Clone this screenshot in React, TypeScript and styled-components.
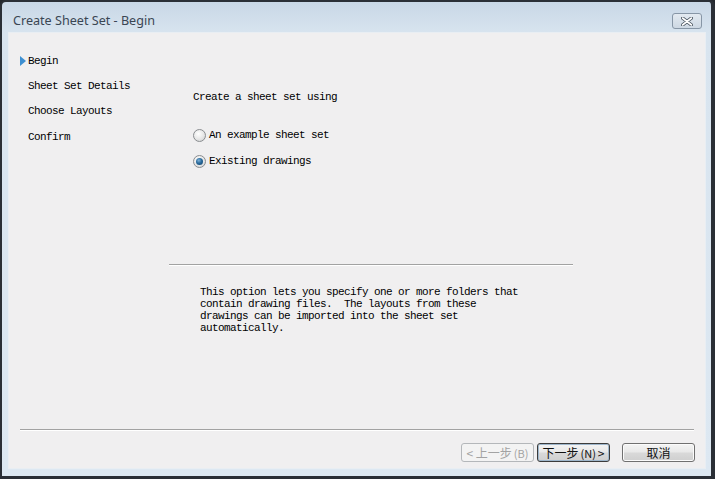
import React from 'react';
import styled, { createGlobalStyle } from 'styled-components';

const GlobalStyle = createGlobalStyle`
  html, body {
    margin: 0;
    padding: 0;
    background: #23272d;
  }
`;

const MONO = `'Liberation Mono', 'DejaVu Sans Mono', monospace`;

const Window = styled.div`
  box-sizing: border-box;
  width: 715px;
  height: 479px;
  display: flex;
  flex-direction: column;
  background: linear-gradient(#c8d7e6 0px, #d8e4ef 31px, #dde8f2 100%);
  border: 2px solid #2a2f36;
  border-right-width: 4px;
  border-bottom-width: 3px;
  border-radius: 6px 6px 0 0;
  padding: 0 5px 7px 6px;
`;

const TitleBar = styled.div`
  height: 30px;
  display: flex;
  align-items: center;
  justify-content: space-between;
  flex-shrink: 0;
`;

const Title = styled.span`
  font-family: 'Noto Sans', 'Open Sans', sans-serif;
  font-size: 12.6px;
  color: #3a4653;
  padding-left: 5px;
  padding-top: 6px;
`;

const CloseButton = styled.div`
  box-sizing: border-box;
  width: 30px;
  height: 16px;
  margin-top: 8px;
  margin-right: 4px;
  border: 1px solid #8796a6;
  border-radius: 3px;
  background: linear-gradient(#e3eaf1, #cdd8e3);
  display: flex;
  align-items: center;
  justify-content: center;
`;

const Client = styled.div`
  flex: 1;
  display: flex;
  flex-direction: column;
  background: #f0eff0;
  border: 1px solid #e9eef3;
  font-family: ${MONO};
  font-size: 11px;
  letter-spacing: -0.6px;
  color: #000;
`;

const Upper = styled.div`
  flex: 1;
  display: flex;
`;

const Sidebar = styled.nav`
  width: 149px;
  padding: 15px 0 0 11px;
  display: flex;
  flex-direction: column;
`;

const Step = styled.div`
  height: 25.4px;
  display: flex;
  align-items: center;
`;

const Marker = styled.span`
  width: 8px;
  height: 10px;
  display: flex;
  align-items: center;
`;

const Main = styled.div`
  width: 404px;
  display: flex;
  flex-direction: column;
  padding-top: 57px;
`;

const Heading = styled.div`
  line-height: 14px;
  padding-left: 24px;
`;

const Options = styled.div`
  margin-top: 18px;
  padding-left: 24px;
  display: flex;
  flex-direction: column;
`;

const Option = styled.label`
  height: 26px;
  display: flex;
  align-items: center;
  gap: 3px;
`;

const Radio = styled.span<{ checked?: boolean }>`
  box-sizing: border-box;
  width: 13px;
  height: 13px;
  border-radius: 50%;
  border: 1px solid #8a8d90;
  background: radial-gradient(circle at 40% 35%, #ffffff 0%, #e6e6e6 55%, #c9cbcd 100%);
  display: flex;
  align-items: center;
  justify-content: center;

  &::after {
    content: '';
    display: ${p => (p.checked ? 'block' : 'none')};
    width: 7px;
    height: 7px;
    border-radius: 50%;
    background: radial-gradient(circle at 40% 35%, #7fb2d8 0%, #2a6a9c 45%, #0f3f66 100%);
  }
`;

const Rule = styled.div<{ inset?: string }>`
  height: 1px;
  background: #a2a2a2;
  border-bottom: 1px solid #ffffff;
  margin: ${p => p.inset || '0'};
`;

const Description = styled.p`
  margin: 20px 0 0 31px;
  line-height: 12px;
  white-space: pre;
`;

const Footer = styled.div`
  display: flex;
  flex-direction: column;
`;

const ButtonRow = styled.div`
  display: flex;
  justify-content: flex-end;
  gap: 3px;
  padding: 12px 10px 6px 0;
`;

const Button = styled.button<{ isDefault?: boolean; gapBefore?: number }>`
  box-sizing: border-box;
  width: 73px;
  height: 19px;
  padding: 0;
  margin-left: ${p => p.gapBefore || 0}px;
  font-family: 'Noto Sans CJK SC', 'Liberation Sans', sans-serif;
  font-size: 12px;
  letter-spacing: 0;
  color: #111;
  border: 1px solid ${p => (p.isDefault ? '#3c3c3c' : '#707070')};
  border-radius: 3px;
  background: linear-gradient(#f4f4f4 0%, #e8e8e8 48%, #d9d9d9 52%, #cfcfcf 100%);
  box-shadow: ${p => (p.isDefault ? 'inset 0 0 0 1px #9fb7cc' : 'inset 0 0 0 1px #fbfbfb')};
  display: flex;
  align-items: center;
  justify-content: center;
  gap: 2px;

  &:disabled {
    color: #a3a3a3;
    border-color: #b4b7ba;
    background: #f3f3f3;
    box-shadow: none;
  }
`;

const Paren = styled.span`
  font-size: 11px;
`;

const steps = ['Begin', 'Sheet Set Details', 'Choose Layouts', 'Confirm'];

function StepArrow() {
  return (
    <svg width="6" height="10" viewBox="0 0 6 10">
      <path d="M0 0 L6 5 L0 10 Z" fill="#3d8fd1" />
    </svg>
  );
}

function CloseGlyph() {
  return (
    <svg width="12" height="9" viewBox="0 0 12 9">
      <path
        d="M1.5 1 L10.5 8 M10.5 1 L1.5 8"
        stroke="#4a5561"
        strokeWidth="3.4"
        strokeLinecap="round"
      />
      <path
        d="M1.5 1 L10.5 8 M10.5 1 L1.5 8"
        stroke="#ffffff"
        strokeWidth="1.6"
        strokeLinecap="round"
      />
    </svg>
  );
}

export default function App() {
  return (
    <>
      <GlobalStyle />
      <Window>
        <TitleBar>
          <Title>Create Sheet Set - Begin</Title>
          <CloseButton>
            <CloseGlyph />
          </CloseButton>
        </TitleBar>
        <Client>
          <Upper>
            <Sidebar>
              {steps.map((s, i) => (
                <Step key={s}>
                  <Marker>{i === 0 && <StepArrow />}</Marker>
                  {s}
                </Step>
              ))}
            </Sidebar>
            <Main>
              <Heading>Create a sheet set using</Heading>
              <Options>
                <Option>
                  <Radio />
                  An example sheet set
                </Option>
                <Option>
                  <Radio checked />
                  Existing drawings
                </Option>
              </Options>
              <Rule inset="90px 0 0 0" />
              <Description>
                {'This option lets you specify one or more folders that\n' +
                  'contain drawing files.  The layouts from these\n' +
                  'drawings can be imported into the sheet set\n' +
                  'automatically.'}
              </Description>
            </Main>
          </Upper>
          <Footer>
            <Rule inset="0 11px 0 11px" />
            <ButtonRow>
              <Button disabled>
                &lt; 上一步<Paren>(B)</Paren>
              </Button>
              <Button isDefault>
                下一步<Paren>(N)</Paren> &gt;
              </Button>
              <Button gapBefore={9}>取消</Button>
            </ButtonRow>
          </Footer>
        </Client>
      </Window>
    </>
  );
}
